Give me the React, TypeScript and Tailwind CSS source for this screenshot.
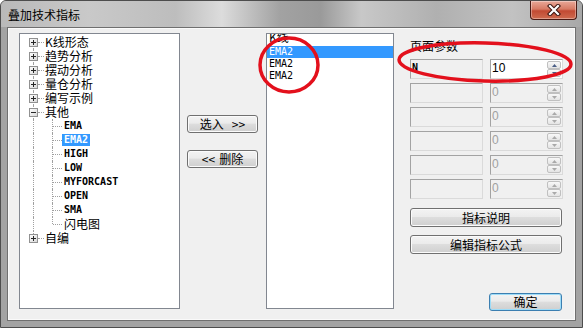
import React from 'react';

const cjk = "font-['Noto_Sans_CJK_SC','Noto_Sans',sans-serif]";
const mono = "font-['DejaVu_Sans_Mono','Liberation_Mono',monospace]";

const dot = 'border-dotted border-[#a0a0a0]';

function Expander({ open }: { open: boolean }) {
  return (
    <svg width="9" height="9" viewBox="0 0 9 9" className="absolute left-[9px] top-[3px]">
      <defs>
        <linearGradient id="exg" x1="0" y1="0" x2="1" y2="1">
          <stop offset="0" stopColor="#ffffff" />
          <stop offset="1" stopColor="#d6d6d6" />
        </linearGradient>
      </defs>
      <rect x="0.5" y="0.5" width="8" height="8" fill="url(#exg)" stroke="#919191" />
      <path d="M2 4.5h5" stroke="#262626" />
      {!open && <path d="M4.5 2v5" stroke="#262626" />}
    </svg>
  );
}

function RootRow({ label, open, first, last }: { label: string; open?: boolean; first?: boolean; last?: boolean }) {
  return (
    <div className="relative flex h-[14px] items-center">
      <span
        className={`absolute left-[13px] border-l ${dot} ${first ? 'top-[7px] bottom-0' : last ? 'top-0 h-[7px]' : 'top-0 bottom-0'}`}
      />
      <span className={`absolute left-[18px] top-[7px] w-[6px] border-t ${dot}`} />
      <Expander open={!!open} />
      <span className={`ml-[24px] px-[1px] text-[12px] leading-[12px] text-black ${cjk}`}>{label}</span>
    </div>
  );
}

function ChildRow({ label, selected, last, latin }: { label: string; selected?: boolean; last?: boolean; latin?: boolean }) {
  return (
    <div className="relative flex h-[14px] items-center">
      <span className={`absolute left-[13px] top-0 bottom-0 border-l ${dot}`} />
      <span className={`absolute left-[32px] border-l ${dot} ${last ? 'top-0 h-[7px]' : 'top-0 bottom-0'}`} />
      <span className={`absolute left-[33px] top-[7px] w-[9px] border-t ${dot}`} />
      <span
        className={`ml-[42px] px-[2px] leading-[12px] ${selected ? 'bg-[#3399ff] text-white' : 'text-black'} ${
          latin ? `${mono} text-[10px] font-bold` : `${cjk} text-[12px]`
        }`}
      >
        {label}
      </span>
    </div>
  );
}

function Btn({ children, className = '', def }: { children: React.ReactNode; className?: string; def?: boolean }) {
  return (
    <button
      type="button"
      className={`flex items-center justify-center rounded-[3px] border ${
        def ? 'border-[#3c7fb1] shadow-[inset_0_0_0_1px_#9ddcf8]' : 'border-[#707070] shadow-[inset_0_0_0_1px_#fbfbfb]'
      } bg-[linear-gradient(180deg,#f3f3f3_0%,#ebebeb_45%,#dddddd_50%,#cfcfcf_100%)] text-[12px] leading-none text-black ${cjk} ${className}`}
    >
      {children}
    </button>
  );
}

function SpinHalf({ up, active }: { up?: boolean; active?: boolean }) {
  return (
    <div className="flex flex-1 items-center justify-center rounded-[2px] border border-[#c0c0c0] bg-gradient-to-b from-[#f8f8f8] to-[#e4e4e4]">
      <svg width="5" height="3" viewBox="0 0 5 3">
        <path d={up ? 'M0 3L2.5 0L5 3Z' : 'M0 0L2.5 3L5 0Z'} fill={active ? '#4a5e86' : '#a9a9a9'} />
      </svg>
    </div>
  );
}

function ParamRow({ name, value, active }: { name: string; value: string; active?: boolean }) {
  return (
    <div className="flex h-[20px] gap-[7px]">
      <div
        className={`w-[73px] border border-[#dadada] border-t-[#a3a3a3] border-l-[#a3a3a3] bg-[#f0f0f0] pl-[1px] pt-[2px] text-[10px] font-bold leading-[12px] text-black ${mono}`}
      >
        {name}
      </div>
      <div
        className={`flex w-[73px] border border-[#dadada] border-t-[#a3a3a3] border-l-[#a3a3a3] ${active ? 'bg-white' : 'bg-[#f0f0f0]'}`}
      >
        <div
          className={`flex-1 pl-[1px] pt-[1px] text-[12px] leading-[14px] font-['Liberation_Sans',Arial,sans-serif] ${
            active ? 'text-black' : 'text-[#a0a0a0]'
          }`}
        >
          {value}
        </div>
        <div className="flex w-[15px] flex-col py-[1px] pr-[1px]">
          <SpinHalf up active={active} />
          <SpinHalf active={active} />
        </div>
      </div>
    </div>
  );
}

const children = ['EMA', 'EMA2', 'HIGH', 'LOW', 'MYFORCAST', 'OPEN', 'SMA'];

export default function App() {
  return (
    <div className="relative flex h-[328px] w-[583px] flex-col overflow-hidden rounded-t-[6px] border border-[#4d4d4d] bg-[#a3a3a3]">
      {/* title bar */}
      <div className="flex h-[26px] shrink-0 items-center justify-between bg-[linear-gradient(90deg,#b9b9b9_0%,#c9c9c9_15%,#bdbdbd_30%,#dcdcdc_38%,#a2a2a2_48%,#9a9a9a_55%,#c8c8c8_62%,#b0b0b0_75%,#c2c2c2_88%,#a8a8a8_100%)]">
        <span className={`pl-[7px] pt-[1px] text-[12px] leading-none text-black ${cjk}`}>叠加技术指标</span>
        <div className="mr-[5px] flex h-[19px] w-[47px] items-center justify-center self-start rounded-b-[4px] border border-t-0 border-[#4a1a14] bg-[linear-gradient(180deg,#e9a898_0%,#d77a64_45%,#c24a33_55%,#cf6b4f_100%)] shadow-[inset_0_0_0_1px_rgba(255,255,255,0.35)]">
          <svg width="14" height="12" viewBox="0 0 14 12">
            <path d="M3 2L11 10M11 2L3 10" stroke="#3b1510" strokeWidth="4.2" strokeLinecap="square" />
            <path d="M3 2L11 10M11 2L3 10" stroke="#ffffff" strokeWidth="2.2" strokeLinecap="square" />
          </svg>
        </div>
      </div>

      {/* client area */}
      <div className="mx-[6px] mb-[6px] flex flex-1 items-start border border-[#6f6f6f] bg-[#f0f0f0] pl-[11px] pt-[5px] shadow-[inset_0_0_0_1px_#fafafa]">
        {/* tree */}
        <div className="h-[276px] w-[161px] shrink-0 overflow-hidden border border-[#828790] bg-white pt-[1px]">
          <RootRow label="K线形态" first />
          <RootRow label="趋势分析" />
          <RootRow label="摆动分析" />
          <RootRow label="量仓分析" />
          <RootRow label="编写示例" />
          <RootRow label="其他" open />
          {children.map((c) => (
            <ChildRow key={c} label={c} latin selected={c === 'EMA2'} />
          ))}
          <ChildRow label="闪电图" last />
          <RootRow label="自编" last />
        </div>

        {/* move buttons */}
        <div className="ml-[7px] mt-[82px] flex w-[71px] shrink-0 flex-col gap-[17px]">
          <Btn className="h-[18px] gap-[8px]">
            <span>选入</span>
            <span>&gt;&gt;</span>
          </Btn>
          <Btn className="h-[18px] gap-[4px]">
            <span>&lt;&lt;</span>
            <span>删除</span>
          </Btn>
        </div>

        {/* selected list */}
        <div className={`ml-[8px] h-[276px] w-[128px] shrink-0 overflow-hidden border border-[#828790] bg-white text-[10px] ${mono}`}>
          <div className="h-[12px] overflow-hidden pl-[2px]">
            <div className={`-mt-[3px] text-[12px] leading-[12px] text-black ${cjk}`}>K线</div>
          </div>
          <div className="h-[12px] bg-[#3399ff] pl-[2px] leading-[12px] text-white">EMA2</div>
          <div className="h-[12px] pl-[2px] leading-[12px] text-black">EMA2</div>
          <div className="h-[12px] pl-[2px] leading-[12px] text-black">EMA2</div>
        </div>

        {/* parameters */}
        <div className="ml-[16px] flex w-[153px] shrink-0 flex-col">
          <div className={`mt-[7px] text-[12px] leading-[12px] text-black ${cjk}`}>页面参数</div>
          <div className="mt-[7px] flex flex-col gap-[4px]">
            <ParamRow name="N" value="10" active />
            <ParamRow name="" value="0" />
            <ParamRow name="" value="0" />
            <ParamRow name="" value="0" />
            <ParamRow name="" value="0" />
            <ParamRow name="" value="0" />
          </div>
          <Btn className="mt-[9px] h-[19px] w-[152px]">指标说明</Btn>
          <Btn className="mt-[8px] h-[19px] w-[152px]">编辑指标公式</Btn>
          <Btn def className="mr-[1px] mt-[39px] h-[18px] w-[73px] self-end">
            确定
          </Btn>
        </div>
      </div>

      {/* red annotation marks */}
      <svg
        className="pointer-events-none absolute left-[-1px] top-[-1px] h-[328px] w-[583px]"
        viewBox="0 0 583 328"
      >
        <ellipse cx="289" cy="65" rx="29" ry="27" fill="none" stroke="#e3101c" strokeWidth="3.5" />
        <ellipse cx="485" cy="62" rx="86" ry="19" fill="none" stroke="#e3101c" strokeWidth="3.5" transform="rotate(1.5 485 62)" />
      </svg>
    </div>
  );
}
